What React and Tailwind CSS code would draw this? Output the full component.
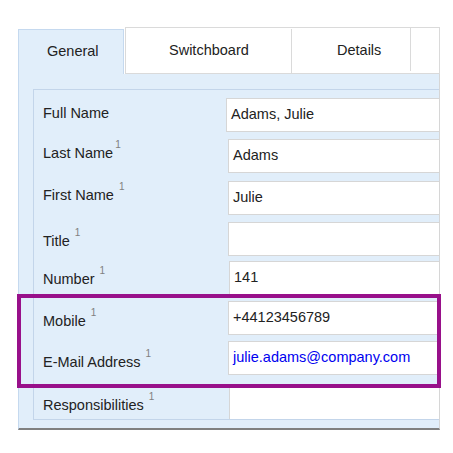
import React from "react";

const rows = [
  { label: "Full Name", sup: null, value: "Adams, Julie", h: 41, lt: 5, ml: "ml-[-2px]" },
  { label: "Last Name", sup: "tight", value: "Adams", h: 42, lt: 4, ml: "ml-0" },
  { label: "First Name", sup: "space", value: "Julie", h: 41, lt: 4, ml: "ml-0" },
  { label: "Title", sup: "space", value: "", h: 39, lt: 9, ml: "ml-0" },
  { label: "Number", sup: "space", value: "141", h: 40, lt: 8, ml: "ml-[1px]" },
  { label: "Mobile", sup: "space", value: "+44123456789", h: 40, lt: 10, ml: "ml-0" },
  { label: "E-Mail Address", sup: "space", value: "julie.adams@company.com", link: true, h: 47, lt: 11, ml: "ml-0" },
];

function Sup({ kind }) {
  if (!kind) return null;
  return (
    <span
      className={
        "text-[10px] leading-none text-[#808080] align-top relative -top-[3px] " +
        (kind === "tight" ? "ml-[2px]" : "ml-[5px]")
      }
    >
      1
    </span>
  );
}

function FieldRow({ row }) {
  return (
    <div className="flex" style={{ height: row.h }}>
      <div className="w-[194px] shrink-0 pl-[9px]" style={{ paddingTop: row.lt }}>
        <span className="leading-[17px] whitespace-nowrap">{row.label}</span>
        <Sup kind={row.sup} />
      </div>
      <div className={"flex-1 min-w-0 " + row.ml}>
        <div className="h-[34px] bg-white border border-r-0 border-[#d6d6d6] flex items-center pl-[4px] whitespace-nowrap">
          <span className={row.link ? "text-[#0000f0]" : ""}>{row.value}</span>
        </div>
      </div>
    </div>
  );
}

export default function App() {
  return (
    <div
      className="w-[453px] h-[453px] bg-white relative overflow-hidden text-[14.5px] text-[#222222]"
      style={{ fontFamily: '"Liberation Sans", Arial, sans-serif' }}
    >
      <div className="ml-[18px] mt-[27px] w-[422px]">
        {/* tab strip */}
        <div className="flex h-[47px]">
          <div className="mt-[2px] w-[106px] h-[45px] bg-[#e1eefa] border-l border-t border-r border-[#c5d9ef] flex items-center pl-[28px]">
            General
          </div>
          <div className="w-[1px]" />
          <div className="flex-1 flex bg-white border border-[#dadada]">
            <div className="w-[165px] flex items-center pl-[43px]">Switchboard</div>
            <div className="w-[1px] mt-[1px] bg-[#dadada]" />
            <div className="w-[118px] flex items-center pl-[45px]">Details</div>
            <div className="w-[1px] mb-[2px] bg-[#dadada]" />
            <div className="flex-1" />
          </div>
        </div>

        {/* tab body */}
        <div className="bg-[#e1eefa] border-l border-[#c5d9ef] border-r border-r-[#d6d6d6] border-b-2 border-b-[#808080] pl-[14px] pt-[15px] pb-[8px] overflow-hidden">
          <div className="border-l border-t border-b border-[#c3d5ea] pt-[8px]">
            {rows.map((r) => (
              <FieldRow key={r.label} row={r} />
            ))}
            <div className="flex h-[31px]">
              <div className="w-[194px] shrink-0 pl-[9px] pt-[7px]">
                <span className="leading-[17px] whitespace-nowrap">Responsibilities</span>
                <Sup kind="space" />
              </div>
              <div className="flex-1 ml-[1px] bg-white border-l border-[#d6d6d6]" />
            </div>
          </div>
        </div>
      </div>

      {/* highlight frame around the contact fields */}
      <div className="absolute left-[17px] top-[294px] w-[424px] h-[94px] border-[4px] border-[#98108a]" />
    </div>
  );
}
